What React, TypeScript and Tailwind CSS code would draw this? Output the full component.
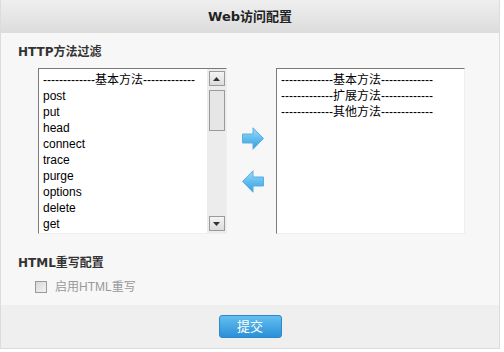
import React from "react";

const dash = "-------------";

function Arrow({ dir }: { dir: "right" | "left" }) {
  const id = dir === "right" ? "gr" : "gl";
  return (
    <svg width="22" height="23" viewBox="0 0 22 23" style={{ transform: dir === "left" ? "scaleX(-1)" : undefined }}>
      <defs>
        <linearGradient id={id} x1="0" y1="0" x2="0" y2="1">
          <stop offset="0" stopColor="#9edcfa" />
          <stop offset="0.5" stopColor="#62bdee" />
          <stop offset="1" stopColor="#3a9fdc" />
        </linearGradient>
      </defs>
      <path d="M0.5 7 L11 7 L11 0.8 L21.5 11.5 L11 22.2 L11 16 L0.5 16 Z" fill={`url(#${id})`} stroke="#5aaee0" strokeWidth="1" />
    </svg>
  );
}

function ScrollBtn({ up }: { up: boolean }) {
  return (
    <div className="w-[16px] h-[15px] border border-[#9a9a9a] bg-gradient-to-b from-[#f4f4f4] to-[#dcdcdc] flex items-center justify-center">
      <svg width="7" height="4" viewBox="0 0 7 4">
        <path d={up ? "M0 4 L3.5 0 L7 4 Z" : "M0 0 L3.5 4 L7 0 Z"} fill="#333" />
      </svg>
    </div>
  );
}

export default function App() {
  const left = [
    `${dash}基本方法${dash}`,
    "post",
    "put",
    "head",
    "connect",
    "trace",
    "purge",
    "options",
    "delete",
    "get",
  ];
  const right = [`${dash}基本方法${dash}`, `${dash}扩展方法${dash}`, `${dash}其他方法${dash}`];
  const sans = { fontFamily: '"Liberation Sans", "Noto Sans CJK SC", sans-serif' };
  const bold = { fontFamily: '"DejaVu Sans", "Noto Sans CJK SC", sans-serif' };
  return (
    <div className="w-[504px] h-[352px] bg-white overflow-hidden" style={sans}>
      <div className="w-[500px] border-l border-r border-b border-[#dcdcdc]">
        <div
          className="h-[33px] flex items-center justify-center bg-gradient-to-b from-[#efefef] to-[#dcdcdc] text-[13px] font-bold text-[#222]"
          style={bold}
        >
          Web访问配置
        </div>
        <div className="bg-[#f7f7f7] h-[272px] pt-[11px] pl-[17px]">
          <div className="h-[16px] leading-[16px] text-[12px] font-bold text-[#333]" style={bold}>
            HTTP方法过滤
          </div>
          <div className="flex mt-[8px] ml-[20px]">
            <div className="w-[189px] h-[166px] bg-white border-t border-l border-[#7a7a7a] border-r border-r-[#efefef] border-b border-b-[#efefef] flex overflow-hidden">
              <div className="flex-1 pt-[3px] pl-[4px] text-[12px] leading-[16px] text-black whitespace-nowrap overflow-hidden">
                {left.map((t) => (
                  <div key={t}>{t}</div>
                ))}
              </div>
              <div className="w-[19px] bg-[#ececec] flex flex-col items-center pt-[2px] pb-[2px]">
                <ScrollBtn up />
                <div className="w-[16px] h-[41px] mt-[4px] border border-[#9a9a9a] bg-[#e6e6e6]" />
                <div className="flex-1" />
                <ScrollBtn up={false} />
              </div>
            </div>
            <div className="w-[49px] flex flex-col items-center pt-[59px] gap-[20px] pl-[2px]">
              <Arrow dir="right" />
              <Arrow dir="left" />
            </div>
            <div className="w-[189px] h-[166px] bg-white border-t border-l border-[#7a7a7a] border-r border-r-[#efefef] border-b border-b-[#efefef] overflow-hidden">
              <div className="pt-[3px] pl-[4px] text-[12px] leading-[16px] text-black whitespace-nowrap">
                {right.map((t) => (
                  <div key={t}>{t}</div>
                ))}
              </div>
            </div>
          </div>
          <div className="mt-[21px] h-[16px] leading-[16px] text-[12px] font-bold text-[#333]" style={bold}>
            HTML重写配置
          </div>
          <div className="mt-[8px] ml-[17px] flex items-center h-[16px]">
            <div className="w-[12px] h-[12px] border border-[#9a9a9a] bg-gradient-to-br from-[#d8d8d8] to-[#f4f4f4]" />
            <span className="ml-[8px] text-[12px] text-[#999]">启用HTML重写</span>
          </div>
        </div>
        <div className="h-[43px] bg-[#efefef] flex justify-center pt-[10px]">
          <button className="w-[63px] h-[23px] rounded-[3px] border border-[#2f86c8] bg-gradient-to-b from-[#62bff0] to-[#2b90d8] text-white text-[13px] leading-none">
            提交
          </button>
        </div>
      </div>
    </div>
  );
}
